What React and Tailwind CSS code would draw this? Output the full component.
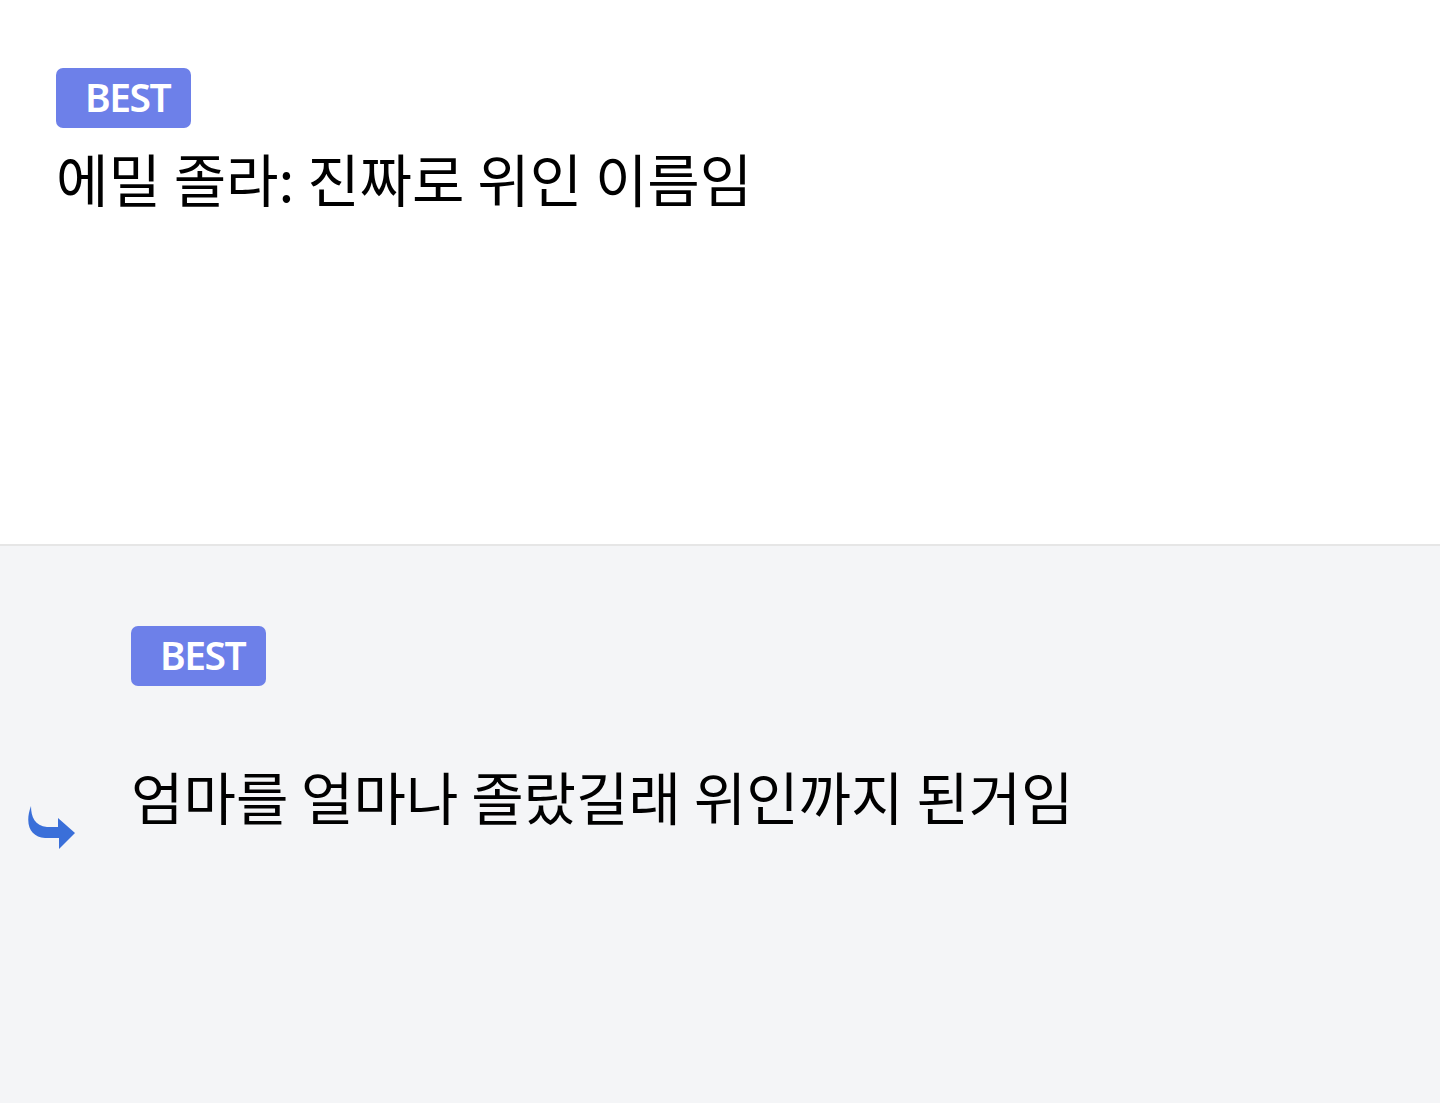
export default function App() {
  const font = { fontFamily: '"Noto Sans CJK KR", "Noto Sans", sans-serif' };
  const Badge = () => (
    <div
      className="inline-flex h-[60px] w-[135px] items-center rounded-[7px] bg-[#6d80e9] pb-[3px] pl-[29px] text-[39px] font-semibold leading-none tracking-[-1.5px] text-white"
      style={{ fontFamily: '"Noto Sans", sans-serif' }}
    >
      BEST
    </div>
  );
  return (
    <div className="min-h-[1103px] w-[1440px] bg-[#f4f5f7]" style={font}>
      <section className="h-[546px] border-b-[2px] border-[#e6e6e6] bg-white px-[56px] pt-[68px]">
        <Badge />
        <h1 className="mt-[14px] text-[57px] font-normal leading-[70px] text-black">
          에밀 졸라: 진짜로 위인 이름임
        </h1>
      </section>
      <section className="flex pt-[80px]">
        <div className="flex w-[131px] shrink-0 flex-col pl-[25px] pt-[179px]">
          <svg width="50" height="46" viewBox="0 0 50 46">
            <path
              d="M6 1 C6 12 10 21 22 22 L33 22 L33 13 L50 28 L34 44 L34 33 L20 33 C6 32 -1 20 6 1 Z"
              fill="#3a6fd9"
            />
          </svg>
        </div>
        <div>
          <Badge />
          <p className="mt-[74px] text-[57px] leading-[70px] text-black">
            엄마를 얼마나 졸랐길래 위인까지 된거임
          </p>
        </div>
      </section>
    </div>
  );
}
